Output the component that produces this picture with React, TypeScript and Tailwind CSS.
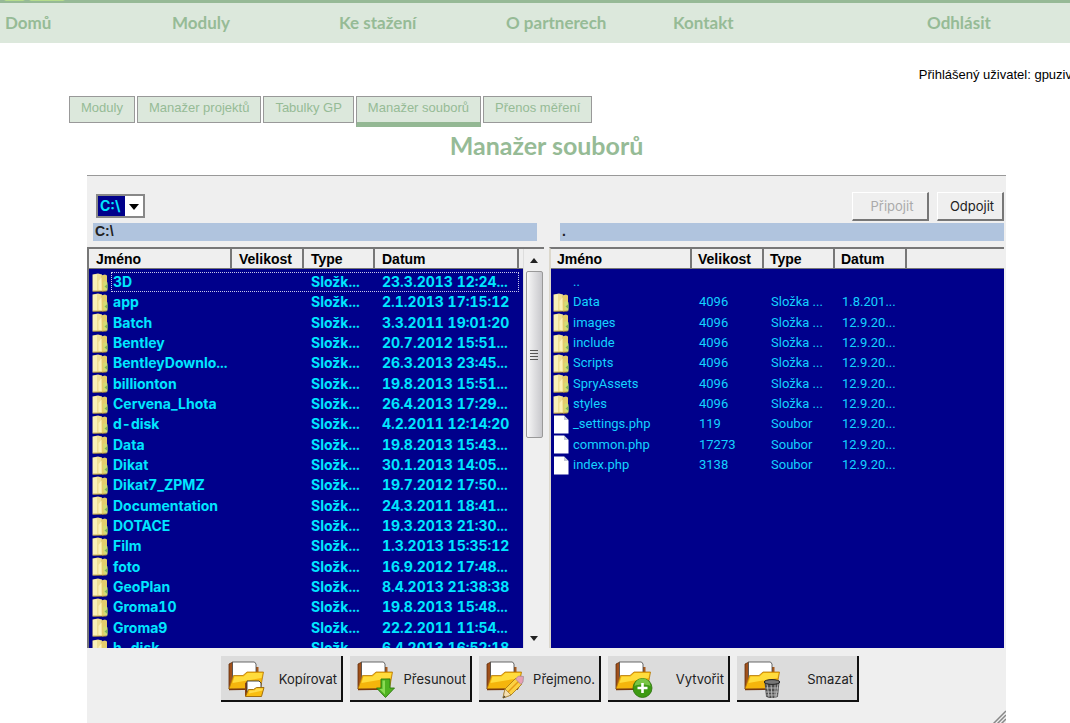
import type { ReactNode } from 'react'

const NAV_ITEMS = ['Domů', 'Moduly', 'Ke stažení', 'O partnerech', 'Kontakt']

const TABS = ['Moduly', 'Manažer projektů', 'Tabulky GP', 'Manažer souborů', 'Přenos měření']

const COLUMNS = ['Jméno', 'Velikost', 'Type', 'Datum']

type FileRow = {
  name: string
  size?: string
  type?: string
  date?: string
  icon?: 'folder' | 'file'
}

const folder = (name: string, date: string): FileRow => ({ name, date, type: 'Složk...', icon: 'folder' })

const LOCAL_FILES: FileRow[] = [
  folder('3D', '23.3.2013 12:24...'),
  folder('app', '2.1.2013 17:15:12'),
  folder('Batch', '3.3.2011 19:01:20'),
  folder('Bentley', '20.7.2012 15:51...'),
  folder('BentleyDownlo...', '26.3.2013 23:45...'),
  folder('billionton', '19.8.2013 15:51...'),
  folder('Cervena_Lhota', '26.4.2013 17:29...'),
  folder('d-disk', '4.2.2011 12:14:20'),
  folder('Data', '19.8.2013 15:43...'),
  folder('Dikat', '30.1.2013 14:05...'),
  folder('Dikat7_ZPMZ', '19.7.2012 17:50...'),
  folder('Documentation', '24.3.2011 18:41...'),
  folder('DOTACE', '19.3.2013 21:30...'),
  folder('Film', '1.3.2013 15:35:12'),
  folder('foto', '16.9.2012 17:48...'),
  folder('GeoPlan', '8.4.2013 21:38:38'),
  folder('Groma10', '19.8.2013 15:48...'),
  folder('Groma9', '22.2.2011 11:54...'),
  folder('h-disk', '6.4.2013 16:52:18'),
]

const REMOTE_FILES: FileRow[] = [
  { name: '..' },
  { name: 'Data', size: '4096', type: 'Složka ...', date: '1.8.201...', icon: 'folder' },
  { name: 'images', size: '4096', type: 'Složka ...', date: '12.9.20...', icon: 'folder' },
  { name: 'include', size: '4096', type: 'Složka ...', date: '12.9.20...', icon: 'folder' },
  { name: 'Scripts', size: '4096', type: 'Složka ...', date: '12.9.20...', icon: 'folder' },
  { name: 'SpryAssets', size: '4096', type: 'Složka ...', date: '12.9.20...', icon: 'folder' },
  { name: 'styles', size: '4096', type: 'Složka ...', date: '12.9.20...', icon: 'folder' },
  { name: '_settings.php', size: '119', type: 'Soubor', date: '12.9.20...', icon: 'file' },
  { name: 'common.php', size: '17273', type: 'Soubor', date: '12.9.20...', icon: 'file' },
  { name: 'index.php', size: '3138', type: 'Soubor', date: '12.9.20...', icon: 'file' },
]

function RowIcon({ kind }: { kind?: 'folder' | 'file' }) {
  if (!kind) return <span className="w-4 shrink-0" />
  if (kind === 'file') {
    return (
      <svg className="w-4 h-[19px] shrink-0" viewBox="0 0 16 19">
        <path d="M1 0.5h10l4.5 4.5v13.5H1z" fill="#fff" />
        <path d="M11 0.5l4.5 4.5H11z" fill="#c4cad8" />
      </svg>
    )
  }
  return (
    <svg className="w-4 h-[19px] shrink-0" viewBox="0 0 16 19">
      <path d="M0.5 1.5L6 0.5l4 1V18l-9.500 0.5z" fill="#efdf94" />
      <path d="M1 2l4-0.8v16.4H1z" fill="#f9f0b8" />
      <path d="M9 2.500l4-1 2 1v15l-5 1z" fill="#e3cc6c" />
      <path d="M6.500 8l3-3.500V18l-3-1.500z" fill="#fbf2b8" />
      <path d="M11 9.500l2-1.500 2.500 1.500v8H12z" fill="#d3dc74" />
      <path d="M12.500 13.500l3-2.500v5z" fill="#7fb65a" />
      <path d="M1 18.200h13.500" stroke="#b08f2c" strokeWidth="0.8" />
    </svg>
  )
}

function FileTable({ rows, local }: { rows: FileRow[]; local?: boolean }) {
  return (
    <table
      className={
        local
          ? "w-full table-fixed border-separate border-spacing-0 font-['Inter',sans-serif] text-sm leading-4 font-bold text-[#00e6ff] tabular-nums"
          : "w-full table-fixed border-separate border-spacing-0 font-['Roboto',sans-serif] text-[13px] leading-4 text-[#14d2ff]"
      }
    >
      <colgroup>
        <col className={local ? 'w-[143px]' : 'w-[141px]'} />
        <col className="w-[72px]" />
        <col className="w-[71px]" />
        <col className={local ? 'w-[144px]' : 'w-[72px]'} />
        <col />
      </colgroup>
      <thead>
        <tr className="h-5 bg-[#efefef] font-['Liberation_Sans',sans-serif] text-sm leading-4 text-black">
          {COLUMNS.map(label => (
            <th
              key={label}
              scope="col"
              className={
                local
                  ? 'border-r-2 border-b border-[#777] px-[7px] text-left font-bold'
                  : 'border-r-2 border-b border-[#777] pr-1 pl-[6px] text-left font-bold'
              }
            >
              {label}
            </th>
          ))}
          <td className="border-b border-[#777]" />
        </tr>
      </thead>
      <tbody>
        <tr className="h-[3px]"><td colSpan={5} /></tr>
        {rows.map((row, i) => (
          // the list uses a 20/20/21 px rhythm
          <tr key={row.name} className={i % 3 === 2 ? 'relative h-[21px]' : 'relative h-5'}>
            <td className={local ? 'p-0 pl-[3px]' : 'p-0 pl-0.5'}>
              <div className={local ? 'flex items-center gap-[5px]' : 'flex items-center gap-1'}>
                <RowIcon kind={row.icon} />
                <span className="whitespace-nowrap">{row.name}</span>
              </div>
              {local && i === 0 && (
                <span className="absolute inset-y-0 left-[22px] right-1 border border-dotted border-[#c8c8e8]" />
              )}
            </td>
            <td className="p-0 pl-[7px]">{row.size}</td>
            <td className="p-0 pl-[7px] whitespace-nowrap">{row.type}</td>
            <td className="p-0 pl-[7px] whitespace-nowrap">{row.date}</td>
            <td />
          </tr>
        ))}
      </tbody>
    </table>
  )
}

function Scrollbar() {
  return (
    <div className="flex w-[21px] shrink-0 flex-col items-center border-l border-[#ddd] bg-[#efefef]">
      <button aria-label="Nahoru" className="flex h-[22px] w-full items-center justify-center">
        <svg width="8" height="5" viewBox="0 0 8 5"><path d="M0 5l4-5 4 5z" fill="#222" /></svg>
      </button>
      <div className="flex h-[167px] w-[17px] flex-col items-center justify-center gap-0.5 rounded-xs border border-[#999] bg-linear-to-r from-[#f7f7f7] to-[#c8c8cc]">
        <span className="h-px w-2 bg-[#555]" />
        <span className="h-px w-2 bg-[#555]" />
        <span className="h-px w-2 bg-[#555]" />
        <span className="h-px w-2 bg-[#555]" />
      </div>
      <button aria-label="Dolů" className="mt-auto flex h-5 w-full items-center justify-center">
        <svg width="8" height="5" viewBox="0 0 8 5"><path d="M0 0l4 5 4-5z" fill="#222" /></svg>
      </button>
    </div>
  )
}

// Open folder shared by all the action buttons, the badge is drawn on top
function ActionIcon({ children }: { children: ReactNode }) {
  return (
    <svg className="w-10 h-10 shrink-0" viewBox="0 0 40 40">
      <path d="M2 5l4-2v26l-4 1z" fill="#a0501a" stroke="#5e2c0a" strokeWidth="0.8" />
      <path d="M28 8h3.500v9H28z" fill="#a85a1c" />
      <path d="M5.500 3h22l1.500 2v18H5.500z" fill="#fff" stroke="#444" strokeWidth="0.8" />
      <path d="M2 30l4.500-13.500h9.500l4-3.500h16.500l-3 16.500z" fill="#f5b50c" stroke="#b57a08" strokeWidth="0.8" />
      <path d="M7.500 17.500h9l4-3.500h15l-1 5L5.500 24z" fill="#ffdc3c" />
      <path d="M2 30.500l31-0.500" stroke="#7a3b0c" strokeWidth="1.500" />
      {children}
    </svg>
  )
}

const ACTIONS = [
  {
    label: 'Kopírovat',
    badge: (
      <>
        <path d="M18 24l2-1v14h-2z" fill="#8a4413" />
        <path d="M20 22h12l2 2v9H20z" fill="#fff" stroke="#333" strokeWidth="0.9" />
        <path d="M18.500 37.500l3-7h5l3-2h7.500l-2.500 9z" fill="#f9bd10" stroke="#9b6505" strokeWidth="0.9" />
        <path d="M22.500 31.500h5l2-2h6.500l-0.500 2-13.500 3z" fill="#ffdc4a" />
      </>
    ),
  },
  {
    label: 'Přesunout',
    badge: (
      <>
        <path d="M25 20h9v9h4.500L29.500 38.500 20.500 29H25z" fill="#4fb321" stroke="#2c760d" strokeWidth="0.9" />
        <path d="M26.500 21.500h2.500V35.500l-5.500-5.500h3z" fill="#8bdc55" />
      </>
    ),
  },
  {
    label: 'Přejmeno.',
    badge: (
      <>
        <path d="M20 30l11-11 6 6-11 11-8 3z" fill="#fbd142" stroke="#a3730d" strokeWidth="0.8" />
        <path d="M23 33l11-11" stroke="#e59a14" strokeWidth="1.500" />
        <path d="M30.500 20l3-3 5 0.500-0.500 5.500-2 2.500z" fill="#e8a0b4" stroke="#9c8792" strokeWidth="0.700" />
        <path d="M20 30l6 6-8 3z" fill="#f5dfb0" stroke="#8b6b2e" strokeWidth="0.600" />
        <path d="M19 36.500l1.500 1.500-2.500 1z" fill="#333" />
      </>
    ),
  },
  {
    label: 'Vytvořit',
    badge: (
      <>
        <circle cx="28.500" cy="29" r="9.500" fill="#3d9a12" stroke="#2b6f0c" strokeWidth="0.8" />
        <path d="M20.500 27a8 7.500 0 0 1 16 0c-4-2-12-2-16 0z" fill="#79c545" />
        <path d="M28.500 24v10M23.500 29h10" stroke="#fff" strokeWidth="2.600" />
      </>
    ),
  },
  {
    label: 'Smazat',
    badge: (
      <>
        <path d="M21.500 23h15L35 37.500c-3 2-9 2-12 0z" fill="#4d4d4d" />
        <path d="M24 25l2 13M28 25l1 14M32 25v14M35 25l-2 13M22.500 29h13M23 33h12M23.500 36h11" stroke="#bdbdbd" strokeWidth="0.900" />
        <ellipse cx="29" cy="23" rx="7.800" ry="2.400" fill="#777" stroke="#222" strokeWidth="1" />
      </>
    ),
  },
]

export default function App() {
  return (
    <div className="min-h-screen overflow-hidden bg-white font-['Liberation_Sans',sans-serif] text-[13px] leading-4">
      {/* Main menu */}
      <header className="relative h-[43px] border-t-[3px] border-[#96b996] bg-[#dce8dc]">
        {/* lower edge of the logo */}
        <svg className="absolute -top-[3px] left-0" width="70" height="2" viewBox="0 0 70 2">
          <path d="M4 0h21l-2 1H6zM29 0h36l-2 1H31z" fill="#b5dc8c" />
        </svg>
        <nav className="flex h-10 items-center pl-[5px] font-['Lato',sans-serif] text-[17px] leading-5 font-bold text-[#96bb96]">
          {NAV_ITEMS.map(item => (
            <a key={item} href="#" className="w-[167px] shrink-0">{item}</a>
          ))}
          <a href="#" className="ml-[87px]">Odhlásit</a>
        </nav>
      </header>

      <div className="flex justify-end overflow-hidden pt-6">
        <span className="-mr-0.5 whitespace-nowrap text-black">Přihlášený uživatel: gpuziv</span>
      </div>

      {/* Module tabs */}
      <div className="mt-[13px] ml-[69px] flex h-[31px] items-start gap-0.5 text-[#96bb96]">
        {TABS.map(tab => (
          <a
            key={tab}
            href="#"
            className={
              tab === 'Manažer souborů'
                ? 'h-[31px] border border-b-[5px] border-[#999] border-b-[#94b894] bg-[#dce8dc] px-[11px] pt-[3px]'
                : 'h-[27px] border border-[#999] bg-[#dce8dc] px-[11px] pt-[3px]'
            }
          >
            {tab}
          </a>
        ))}
      </div>

      <main className="mr-16 ml-[87px]">
        <h1 className="py-1 text-center font-['Lato',sans-serif] text-[25px] leading-7 font-bold text-[#96bb96]">
          Manažer souborů
        </h1>

        <div className="relative mt-3 border-t border-[#999] bg-[#efefef] pb-[22px]">
          <div className="flex h-[47px] items-end justify-between pr-0.5 pl-[9px]">
            <div className="relative mb-[5px] flex h-6 w-[49px] border-2 border-[#888] bg-white">
              <select
                aria-label="Disk"
                className="w-full appearance-none bg-linear-to-r from-[#00008b] from-60% to-white to-60% pl-0.5 font-['Inter',sans-serif] text-sm font-bold text-[#00e6ff] outline-none"
              >
                <option>C:\</option>
              </select>
              <svg className="pointer-events-none absolute top-2 right-1" width="10" height="6" viewBox="0 0 10 6">
                <path d="M0 0h10L5 6z" fill="#000" />
              </svg>
            </div>
            <div className="mb-0.5 flex gap-2 font-['Inter',sans-serif]">
              <button
                disabled
                className="h-[29px] w-[77px] border-t border-r-2 border-b-2 border-l border-t-white border-r-[#777] border-b-[#777] border-l-white pl-1 text-[#aaa]"
              >
                Připojit
              </button>
              <button className="h-[29px] w-[67px] border-t border-r-2 border-b-2 border-l border-t-white border-r-[#777] border-b-[#777] border-l-white pl-1 text-[#222]">
                Odpojit
              </button>
            </div>
          </div>

          <div className="flex gap-[5px]">
            <section className="min-w-0 flex-1">
              <div className="mr-[7px] ml-1.5 h-[18px] bg-[#b0c4de] pl-0.5 text-sm leading-4 font-bold text-[#222]">C:\</div>
              <div className="mt-1.5 flex h-[401px] overflow-hidden border-t-2 border-l-2 border-[#777] bg-[#00008b]">
                <div className="min-w-0 flex-1">
                  <FileTable rows={LOCAL_FILES} local />
                </div>
                <Scrollbar />
              </div>
            </section>
            <section className="min-w-0 flex-1">
              <div className="mr-0.5 ml-[11px] h-[18px] bg-[#b0c4de] pl-0.5 text-sm leading-4 font-bold text-[#222]">.</div>
              <div className="mt-1.5 mr-0.5 h-[401px] overflow-hidden border-t-2 border-l-2 border-t-[#777] border-l-[#dcd8cc] bg-[#00008b]">
                <FileTable rows={REMOTE_FILES} />
              </div>
            </section>
          </div>

          {/* File actions */}
          <div className="mt-2 flex gap-[7px] pl-[134px] font-['Inter',sans-serif] text-[#222]">
            {ACTIONS.map(action => (
              <button
                key={action.label}
                className="flex h-[46px] w-[122px] shrink-0 items-center justify-between border-r-2 border-b-2 border-[#111] bg-[#dcdcdc] pt-0.5 pr-1 pl-1.5"
              >
                <ActionIcon>{action.badge}</ActionIcon>
                {action.label}
              </button>
            ))}
          </div>

          <svg className="absolute right-0 bottom-0" width="14" height="14" viewBox="0 0 14 14">
            <path d="M1 14L14 1M5 14l9-9M9 14l5-5" stroke="#888" strokeWidth="1.500" />
          </svg>
        </div>
      </main>
    </div>
  )
}
